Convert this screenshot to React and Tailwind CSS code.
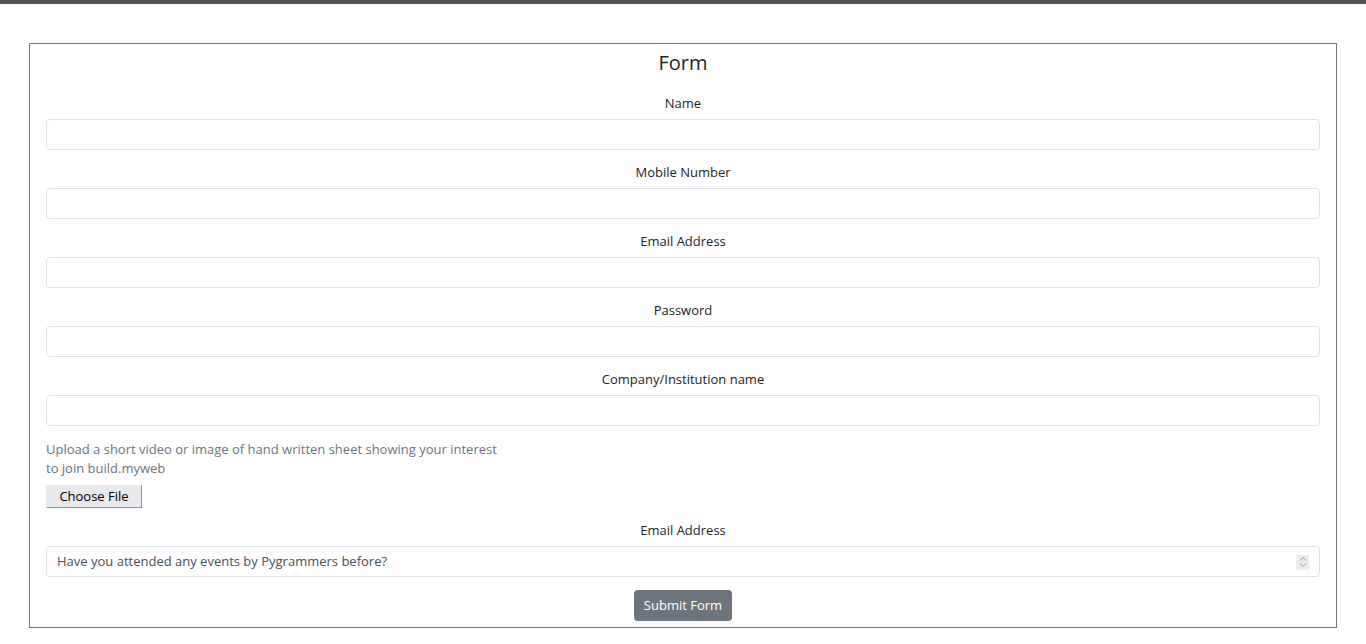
export default function App() {
  const fields = ["Name", "Mobile Number", "Email Address", "Password", "Company/Institution name"];

  return (
    <div className="min-h-screen bg-white text-[#212529]" style={{ fontFamily: '"Open Sans", "Noto Sans", sans-serif' }}>
      <div className="h-[4px] bg-[#4f5359]" />

      <div className="px-[29px] pt-[39px]">
        <form className="border border-[#6c757d] px-4 pt-[4px] pb-[6px]">
          <h2 className="text-center text-[20px] leading-[30px] mb-[15px]">Form</h2>

          {fields.map((label) => (
            <div key={label} className="mb-[12px]">
              <label className="block text-center text-[13px] leading-[21px] mb-[5px]">{label}</label>
              <input
                type="text"
                className="block w-full h-[31px] border border-[#dee2e6] rounded-[4px] px-2 text-[13px] outline-none"
              />
            </div>
          ))}

          <p className="text-[13px] leading-[19px] text-[#6c757d] max-w-[455px] mt-[14px]">
            Upload a short video or image of hand written sheet showing your interest to join build.myweb
          </p>
          <div className="mt-[5px] mb-[12px]">
            <button
              type="button"
              className="h-[23px] w-[96px] bg-[#e9e9ed] border border-[#8f8f9d] border-t-[#e9e9ed] border-l-[#e9e9ed] text-[13px] leading-none text-black"
            >
              Choose File
            </button>
          </div>

          <div className="mb-[13px]">
            <label className="block text-center text-[13px] leading-[21px] mb-[5px]">Email Address</label>
            <div className="flex items-center h-[31px] border border-[#dee2e6] rounded-[4px] pl-[10px] pr-[10px] pt-px text-[13px] text-[#495057]">
              <span className="flex-1">Have you attended any events by Pygrammers before?</span>
              <span className="flex flex-col items-center justify-center w-[13px] h-[15px] bg-[#ececef]">
                <svg width="8" height="12" viewBox="0 0 8 12" fill="none" stroke="#9a9aa2" strokeWidth="1">
                  <path d="M1 4.5 L4 1.5 L7 4.5" />
                  <path d="M1 7.5 L4 10.5 L7 7.5" />
                </svg>
              </span>
            </div>
          </div>

          <div className="flex justify-center">
            <button
              type="button"
              className="h-[31px] px-[10px] rounded-[4px] bg-[#6c757d] text-white text-[13px]"
            >
              Submit Form
            </button>
          </div>
        </form>
      </div>
    </div>
  );
}
